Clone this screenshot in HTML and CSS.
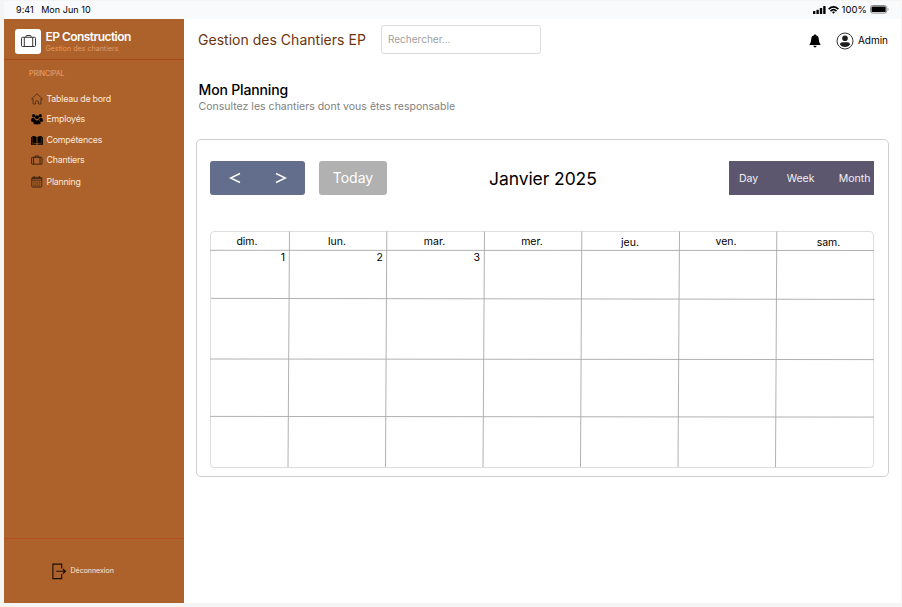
FILE: index.html
```html
<!DOCTYPE html>
<html lang="fr">
<head>
<meta charset="utf-8">
<title>Mon Planning</title>
<link rel="stylesheet" href="styles.css">
</head>
<body>
<div class="device">
  <div class="status">
    <span class="clock">9:41</span><span class="date">Mon Jun 10</span>
    <span class="signals">
      <svg class="cell" width="13" height="8" viewBox="0 0 13 8"><rect x="0" y="5" width="2.4" height="3" rx=".6"/><rect x="3.4" y="3.8" width="2.4" height="4.2" rx=".6"/><rect x="6.8" y="2" width="2.4" height="6" rx=".6"/><rect x="10.2" y="0" width="2.4" height="8" rx=".6"/></svg>
      <svg class="wifi" width="11" height="8" viewBox="0 0 11 8" fill="none" stroke="#000" stroke-width="1.6"><path d="M.6 3.1Q5.5-1.4 10.4 3.1M2.5 5.1Q5.5 2.3 8.5 5.1"/><path d="M3.9 6.1Q5.5 4.9 7.1 6.1L5.5 7.8Z" fill="#000" stroke="none"/></svg>
      <span class="percent">100%</span>
      <svg class="battery" width="19" height="9" viewBox="0 0 19 9"><rect x=".5" y=".5" width="16.2" height="7.6" rx="2.2" fill="none" stroke="#8b8b8d"/><rect x="1.5" y="1.5" width="14.2" height="5.6" rx="1.2"/><path d="M17.6 3v2.8q1-.4 1-1.4t-1-1.4z" fill="#8b8b8d"/></svg>
    </span>
  </div>
  <div class="body">
    <aside class="sidebar">
      <div class="brand">
        <span class="logo"><svg width="15" height="12" viewBox="0 0 15 12" fill="none" stroke="#222" stroke-width=".9"><rect x=".5" y="2.3" width="14" height="9.2" rx="1"/><path d="M5 2.3V1.2q0-.7.7-.7h3.6q.7 0 .7.7v1.1M3.3 2.3v9.2M11.7 2.3v9.2"/></svg></span>
        <div><div class="name">EP Construction</div><div class="tag">Gestion des chantiers</div></div>
      </div>
      <div class="section">PRINCIPAL</div>
      <nav class="menu">
        <a><svg width="12" height="12" viewBox="0 0 12 12" fill="none" stroke="#33200f" stroke-width=".7"><path d="M.6 6 6 .8 11.4 6H9.9v5H7.4V8.6q0-.8-1.4-.8t-1.4.8V11H2.1V6Z" stroke-linejoin="round"/></svg><span>Tableau de bord</span></a>
        <a><svg width="12" height="12" viewBox="0 0 12 12"><circle cx="2.7" cy="2.7" r="1.6"/><circle cx="9.3" cy="2.7" r="1.6"/><circle cx="6" cy="4.2" r="2"/><path d="M.2 8.5V6.5q0-1.8 1.8-1.8h1.3Q3.6 6.5 4.4 7 2.9 7.4 2.5 8.9ZM11.8 8.5V6.5q0-1.8-1.8-1.8H8.7Q8.4 6.5 7.6 7 9.1 7.4 9.5 8.9ZM2.5 11V9q0-2.2 2.2-2.2L6 7.7l1.3-.9Q9.5 6.8 9.5 9v2q-3.500.8-7 0Z"/></svg><span>Employés</span></a>
        <a><svg width="12" height="12" viewBox="0 0 12 12"><path d="M0 3h.9v6.5q2.6-.5 4.7.8v.5H0ZM12 3h-.9v6.5q-2.6-.5-4.7.8v.5H12ZM1.3 2q2.7-.3 4.3.9v6.5Q3.7 8.400 1.3 8.9ZM10.7 2Q8 1.7 6.4 2.900v6.5q1.9-1 4.3-.5Z"/></svg><span>Compétences</span></a>
        <a><svg width="12" height="12" viewBox="0 0 12 12" fill="none" stroke="#2b1a0c" stroke-width=".85"><rect x=".6" y="3.3" width="10.4" height="6.9" rx=".8"/><path d="M4 3.3V2h3.7v1.3M2.6 3.3v6.9M9 3.3v6.9"/></svg><span>Chantiers</span></a>
        <a><svg width="12" height="12" viewBox="0 0 12 12" fill="none" stroke="#3a2210" stroke-width=".9"><rect x=".8" y="1.3" width="10" height="9.8" rx="1"/><path d="M.8 2.5h10M.8 4.2h10M3.2 0v2.2M8.4 0v2.2"/><path d="M2.4 6.2h7M2.4 8h7M2.4 9.8h7" stroke-dasharray="1.2 .7"/></svg><span>Planning</span></a>
      </nav>
      <div class="logout"><svg width="15" height="17" viewBox="0 0 15 17" fill="none" stroke="#1b0f05" stroke-width="1.1"><path d="M9.7 5.5V1.1H.9v14.500h8.8v-4.5"/><path d="M4.2 8.3h8.5M10.9 5.9l2.6 2.4-2.6 2.4"/><path d="M11.4 6.6v3.4l2-1.7z" fill="#1b0f05" stroke="none"/></svg><span>Déconnexion</span></div>
    </aside>
    <main class="main">
      <header class="topbar">
        <div class="app">Gestion des Chantiers EP</div>
        <div class="search">Rechercher...</div>
        <svg class="bell" width="12" height="14" viewBox="0 0 12 14"><path d="M6 .3q.9 0 .9 1Q9.7 2 9.8 5.2 9.9 8.8 11.6 11H.4Q2.1 8.8 2.2 5.2 2.3 2 5.1 1.3q0-1 .9-1ZM4.4 11.700h3.200Q7.400 13.400 6 13.400T4.400 11.700Z"/></svg>
        <svg class="avatar" width="18" height="18" viewBox="0 0 18 18"><circle cx="9" cy="9" r="8" fill="none" stroke="#1e1e1e" stroke-width=".9"/><circle cx="9" cy="6.3" r="2.8" fill="#1e1e1e"/><path d="M4 12.700q0-2.500 2.500-2.500h5q2.500 0 2.500 2.500-1.700 2.200-5 2.200t-5-2.200Z" fill="#1e1e1e"/></svg>
        <span class="user">Admin</span>
      </header>
      <h1 class="title">Mon Planning</h1>
      <p class="sub">Consultez les chantiers dont vous êtes responsable</p>
      <section class="card">
        <div class="toolbar">
          <div class="arrows"><svg width="12" height="12" viewBox="0 0 12 12"><path d="M11 1.500 1.500 6l9.500 4.500"/></svg><svg width="12" height="12" viewBox="0 0 12 12"><path d="M1 1.500 10.500 6 1 10.500"/></svg></div>
          <div class="today">Today</div>
          <div class="month">Janvier 2025</div>
          <div class="views"><span>Day</span><span class="week">Week</span><span>Month</span></div>
        </div>
        <div class="calendar">
          <div class="days"><span class="first">dim.</span><span>lun.</span><span>mar.</span><span>mer.</span><span class="low">jeu.</span><span class="ven">ven.</span><span class="low sam">sam.</span></div>
          <div class="dates"><span>1</span><span>2</span><span>3</span></div>
          <svg class="rules" width="666" height="237" viewBox="0 0 666 237"><path d="M79.500.5 78 236M176.800.5 175.500 236M274.500.5 273 236M371.800.5 370.500 236M469.500.5 468 236M566.800.5 565.500 236M0 19.300 664 19.500M1 67.400 665 68.400M0 128 664 128.600M0 185.400 664 186.100"/></svg>
        </div>
      </section>
    </main>
  </div>
</div>
</body>
</html>
```
FILE: styles.css
```css
* { box-sizing: border-box; }
body { margin: 0; width: 902px; height: 607px; overflow: hidden; background: #f5f5f5; font-family: Inter, sans-serif; color: #000; padding: 1px 1px 4px 4px; }
svg { display: block; flex: none; }
span, .name, .tag, .app, .month { white-space: nowrap; }
.device { height: 602px; display: flex; flex-direction: column; background: #fff; }
.status { height: 18px; flex: none; background: #f8fafc; display: flex; align-items: center; padding: 0 0 1px 12px; font-size: 9px; letter-spacing: .05px; }
.date { margin-left: 7.5px; }
.signals { display: flex; align-items: center; margin-left: auto; padding-right: 12px; }
.wifi { margin-left: 2px; }
.percent { margin: 0 3px; font-size: 9.5px; }
.body { flex: 1; display: flex; min-height: 0; }
.sidebar { width: 180px; flex: none; background: #ad622b; display: flex; flex-direction: column; color: #fbe9dc; }
.brand { height: 41px; display: flex; align-items: center; padding: 4px 0 0 11px; gap: 4.5px; border-bottom: 1px solid #a94a15; }
.logo { width: 26px; height: 25px; background: #fff; border-radius: 3px; display: flex; align-items: center; justify-content: center; }
.name { font-size: 12px; line-height: 14px; font-weight: 600; color: #fff; letter-spacing: -.55px; }
.tag { font-size: 7px; line-height: 9px; color: #e69a66; letter-spacing: .05px; }
.section { font-size: 7px; line-height: 10px; color: #f0a470; margin: 9px 0 9.5px 25px; letter-spacing: -.05px; }
.menu { display: grid; grid-template-rows: 20px 20px 22px 19px 24px; font-size: 8.8px; letter-spacing: -.2px; padding-left: 27px; }
.menu a { display: flex; align-items: center; gap: 3.5px; }
.menu span { padding-bottom: 1px; }
.logout { margin-top: auto; height: 65px; border-top: 1px solid #b64f1d; display: flex; align-items: center; gap: 3.5px; padding-left: 48px; font-size: 7px; }
.logout span { padding-bottom: 1px; }
.main { flex: 1; padding: 0 12px 0 12px; }
.topbar { height: 43px; display: flex; align-items: center; padding: 0 1px 0 2px; }
.app { width: 183px; padding-bottom: 2px; font-size: 14px; color: #6a3410; letter-spacing: .02px; }
.search { width: 160px; height: 29px; margin-top: -3px; border: 1px solid #dcdcdc; border-radius: 3px; padding-left: 6px; font-size: 10px; line-height: 27px; color: #a0a0a0; }
.bell { margin-left: auto; }
.avatar { margin: 0 4px 0 15px; }
.user { font-size: 10px; padding-bottom: 1px; }
.title { margin: 19px 0 0 2.5px; font-size: 14px; line-height: 18px; font-weight: 500; letter-spacing: -.15px; }
.sub { margin: 0 0 0 2.5px; font-size: 10.5px; line-height: 16px; color: #808080; letter-spacing: .02px; }
.card { margin-top: 24px; width: 693px; height: 338px; border: 1px solid #cfcfcf; border-radius: 5px; padding: 21px 13px; }
.toolbar { display: flex; align-items: center; height: 34px; width: 664px; }
.arrows { width: 95px; height: 34px; border-radius: 3px; background: #626e8b; display: flex; align-items: center; padding-left: 19px; gap: 34px; }
.arrows path { fill: none; stroke: #fff; stroke-width: 1.5; }
.today { width: 68px; height: 34px; margin-left: 14px; border-radius: 3px; background: #b1b1b1; color: #fff; text-align: center; font-size: 14px; line-height: 34px; }
.month { margin-left: 102px; font-size: 17.5px; letter-spacing: -.08px; }
.views { margin-left: auto; width: 145px; height: 34px; background: #5c576e; color: #f2f0f5; display: flex; align-items: center; justify-content: space-between; padding: 0 3.5px 0 10px; font-size: 10.5px; }
.views .week { padding-left: 4px; }
.calendar { position: relative; margin-top: 36px; width: 664px; height: 237px; border: 1px solid #dedede; border-radius: 4px; }
.days, .dates { display: grid; grid-template-columns: 78px 98px 97px 98px 97px 98px 96px; }
.days { height: 18px; align-items: center; text-align: center; font-size: 10.5px; padding-top: 1px; }
.days span { padding-right: 2px; }
.days .first { padding-right: 6px; }
.days .low { padding: 1px 1px 0 0; }
.days .ven { padding-right: 4px; }
.days .sam { padding-left: 8px; }
.dates { text-align: right; font-size: 10.5px; line-height: 15px; }
.dates span { padding-right: 4px; }
.rules { position: absolute; left: -1px; top: -1px; fill: none; stroke: #a8a8a8; stroke-width: .9; }
```
